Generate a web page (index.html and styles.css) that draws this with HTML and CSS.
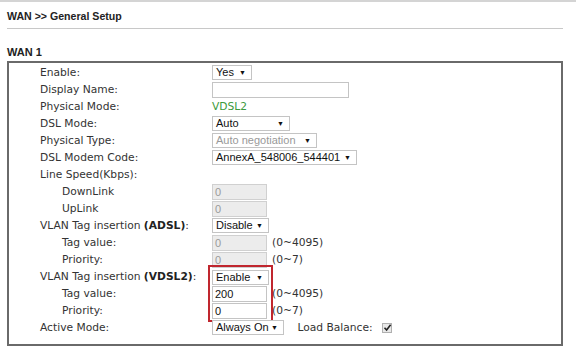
FILE: index.html
```html
<!DOCTYPE html>
<html lang="en">
<head>
    <meta charset="UTF-8">
    <title>WAN General Setup</title>
    <link rel="stylesheet" href="styles.css">
</head>
<body>
    <div class="page">
        <div class="page-title">WAN &gt;&gt; General Setup</div>
        <div class="section-title">WAN 1</div>
        <div class="panel">
            <table class="setup">
                <tr>
                    <td class="label">Enable:</td>
                    <td><span class="select w-yes">Yes<i>&#9660;</i></span></td>
                </tr>
                <tr>
                    <td class="label">Display Name:</td>
                    <td><span class="input w-name"></span></td>
                </tr>
                <tr>
                    <td class="label">Physical Mode:</td>
                    <td><span class="mode">VDSL2</span></td>
                </tr>
                <tr>
                    <td class="label">DSL Mode:</td>
                    <td><span class="select w-auto">Auto<i>&#9660;</i></span></td>
                </tr>
                <tr>
                    <td class="label">Physical Type:</td>
                    <td><span class="select w-nego disabled">Auto negotiation<i>&#9660;</i></span></td>
                </tr>
                <tr>
                    <td class="label">DSL Modem Code:</td>
                    <td><span class="select w-annex">AnnexA_548006_544401<i>&#9660;</i></span></td>
                </tr>
                <tr>
                    <td class="label">Line Speed(Kbps):</td>
                    <td></td>
                </tr>
                <tr>
                    <td class="label sub">DownLink</td>
                    <td><span class="input w-num disabled">0</span></td>
                </tr>
                <tr>
                    <td class="label sub">UpLink</td>
                    <td><span class="input w-num disabled">0</span></td>
                </tr>
                <tr>
                    <td class="label">VLAN Tag insertion <b>(ADSL)</b>:</td>
                    <td><span class="select w-dis">Disable<i>&#9660;</i></span></td>
                </tr>
                <tr>
                    <td class="label sub">Tag value:</td>
                    <td><span class="input w-num disabled">0</span><span class="range">(0~4095)</span></td>
                </tr>
                <tr>
                    <td class="label sub">Priority:</td>
                    <td><span class="input w-num disabled">0</span><span class="range">(0~7)</span></td>
                </tr>
                <tr>
                    <td class="label">VLAN Tag insertion <b>(VDSL2)</b>:</td>
                    <td>
                        <div class="hl-wrap">
                            <div class="highlight"></div>
                            <span class="select w-dis">Enable<i>&#9660;</i></span>
                        </div>
                    </td>
                </tr>
                <tr>
                    <td class="label sub">Tag value:</td>
                    <td><span class="input w-num">200</span><span class="range">(0~4095)</span></td>
                </tr>
                <tr>
                    <td class="label sub">Priority:</td>
                    <td><span class="input w-num">0</span><span class="range">(0~7)</span></td>
                </tr>
                <tr>
                    <td class="label">Active Mode:</td>
                    <td>
                        <span class="select w-on">Always On<i>&#9660;</i></span>
                        <span class="lb">Load Balance:</span>
                        <span class="check">
                            <svg width="9" height="9" viewBox="0 0 9 9"><path d="M1.5 4.8 L3.6 7 L7.6 1.8" fill="none" stroke="#222" stroke-width="1.6"/></svg>
                        </span>
                    </td>
                </tr>
            </table>
        </div>
    </div>
</body>
</html>
```

FILE: styles.css
```css
body {
    margin: 0;
    background: #ffffff;
    font-family: "DejaVu Sans", Verdana, sans-serif;
    color: #333;
}
.page {
    border-top: 2px solid #d4d4d4;
    padding: 0 13px 0 7px;
}
.page-title {
    font-family: "Liberation Sans", Arial, sans-serif;
    font-weight: bold;
    font-size: 10.6px;
    color: #222;
    padding: 8px 0 6px 0;
    border-bottom: 1px solid #c8c8c8;
}
.section-title {
    font-family: "Liberation Sans", Arial, sans-serif;
    font-weight: bold;
    font-size: 11px;
    color: #222;
    padding: 17px 0 3px 0;
}
.panel {
    border: 2px solid #6a6a6a;
    padding: 1px 0 6px 31px;
    height: 274px;
}
.setup {
    border-collapse: collapse;
}
.setup td {
    height: 17px;
    padding: 0;
    font-size: 10.7px;
    line-height: 15px;
    vertical-align: middle;
    white-space: nowrap;
}
.label {
    color: #333;
    width: 172px;
}
.label b {
    color: #222;
}
.setup td.sub {
    padding-left: 22px;
    width: 150px;
}
.mode {
    color: #3c9a3c;
}
.select, .input {
    display: inline-block;
    box-sizing: border-box;
    position: relative;
    vertical-align: middle;
    font-family: "Liberation Sans", Arial, sans-serif;
    font-size: 11px;
    color: #111;
    background: #fff;
    border: 1px solid #c4c4c4;
    padding: 0 0 0 3px;
    line-height: 13px;
}
.select {
    height: 15px;
}
.input {
    height: 16px;
    line-height: 14px;
    padding-left: 2px;
}
.select i {
    position: absolute;
    right: 5px;
    top: 0;
    font-style: normal;
    font-size: 7px;
    color: #111;
}
.select.disabled {
    color: #999;
}
.input.disabled {
    background: #ececec;
    color: #9a9a9a;
    border-color: #d0d0d0;
}
.w-yes { width: 40px; }
.w-name { width: 137px; }
.w-auto { width: 78px; }
.w-nego { width: 105px; }
.w-annex { width: 145px; }
.w-num { width: 55px; }
.w-dis { width: 57px; }
.w-on { width: 72px; }
.range {
    color: #333;
    margin-left: 5px;
    vertical-align: middle;
}
.hl-wrap {
    position: relative;
    height: 15px;
}
.highlight {
    position: absolute;
    left: -4px;
    top: -4px;
    width: 65px;
    height: 57px;
    box-sizing: border-box;
    border: 2px solid #c0262e;
    pointer-events: none;
}
.lb {
    color: #333;
    margin-left: 10px;
    vertical-align: middle;
}
.check {
    display: inline-block;
    box-sizing: border-box;
    width: 10px;
    height: 10px;
    border: 1px solid #b0b0b0;
    background: #e8e8e8;
    margin-left: 6px;
    vertical-align: middle;
    position: relative;
}
.check svg {
    position: absolute;
    left: 0;
    top: -1px;
}
```
